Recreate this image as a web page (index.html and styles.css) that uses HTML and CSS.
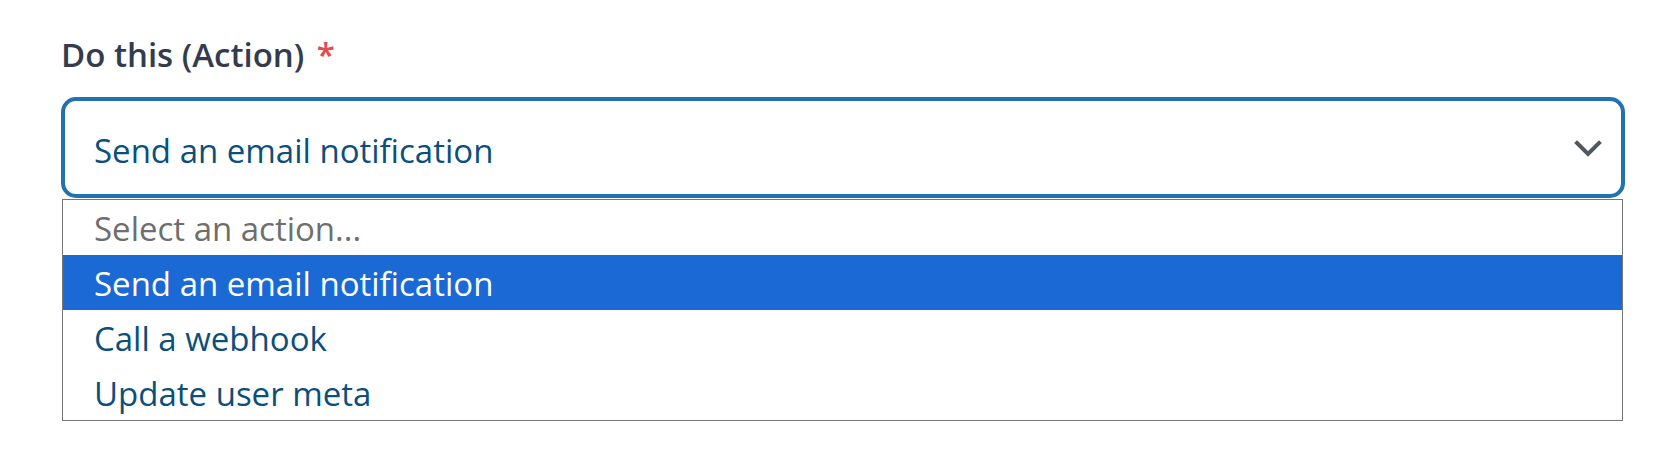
FILE: index.html
```html
<!DOCTYPE html>
<html lang="en">
<head>
<meta charset="utf-8">
<title>Do this (Action)</title>
<link rel="stylesheet" href="styles.css">
</head>
<body>
<div class="field">
  <label class="field-label">Do this (Action) <span class="req">*</span></label>
  <div class="select">
    <span class="select-value">Send an email notification</span>
    <svg class="chevron" width="28" height="18" viewBox="0 0 28 18" aria-hidden="true">
      <polyline points="3,3 14,14 25,3" fill="none" stroke="#50575e" stroke-width="4" stroke-linecap="square"/>
    </svg>
  </div>
  <ul class="options">
    <li class="option placeholder">Select an action...</li>
    <li class="option selected">Send an email notification</li>
    <li class="option">Call a webhook</li>
    <li class="option">Update user meta</li>
  </ul>
</div>
</body>
</html>
```

FILE: styles.css
```css
html, body {
  margin: 0;
  padding: 0;
  background: #ffffff;
}

body {
  font-family: "Open Sans", "Noto Sans", sans-serif;
}

.field {
  padding: 33px 55px 0 61px;
  display: flex;
  flex-direction: column;
}

.field-label {
  font-size: 33px;
  font-weight: 600;
  line-height: 44px;
  color: #333c4d;
}

.req {
  color: #e5484d;
  margin-left: 4px;
}

.select {
  margin-top: 20px;
  height: 101px;
  box-sizing: border-box;
  border: 4px solid #2271b1;
  border-radius: 15px;
  display: flex;
  align-items: center;
  padding: 5px 19px 0 29px;
}

.select-value {
  flex: 1;
  font-size: 33px;
  line-height: 45px;
  color: #0b4f7c;
}

.chevron {
  display: block;
  margin-bottom: 2px;
}

.options {
  list-style: none;
  margin: 1px 2px 0 1px;
  padding: 0;
  border: 1px solid #767676;
}

.option {
  height: 55px;
  box-sizing: border-box;
  padding: 3px 0 0 31px;
  font-size: 33px;
  line-height: 52px;
  color: #0b4f7c;
}

.option.placeholder {
  color: #6e6e6e;
}

.option.selected {
  background: #1a69d4;
  color: #ffffff;
}
```
